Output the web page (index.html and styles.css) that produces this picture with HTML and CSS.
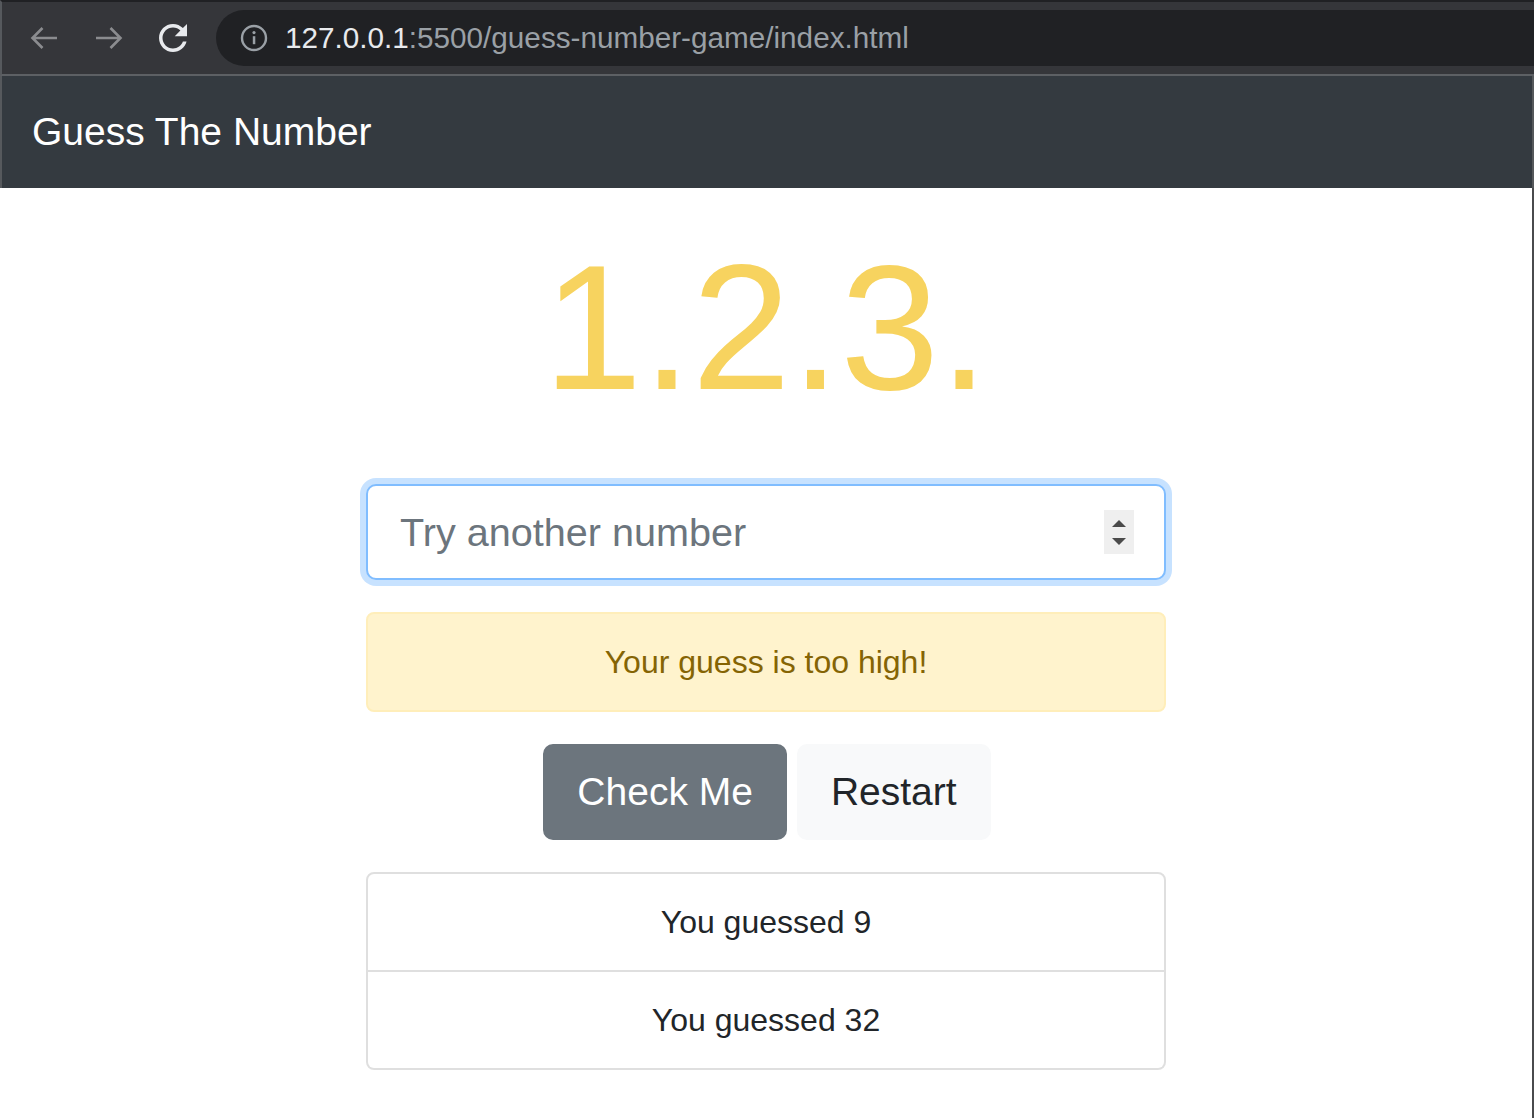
FILE: index.html
```html
<!DOCTYPE html>
<html lang="en">
<head>
<meta charset="utf-8">
<title>Guess The Number</title>
<link rel="stylesheet" href="styles.css">
</head>
<body>
<div class="window">
  <header class="toolbar">
    <div class="nav-btn back">
      <svg width="28" height="24" viewBox="0 0 28 24"><path d="M27 12H2.5M12.5 2L2.5 12l10 10" fill="none" stroke="#8b8c8f" stroke-width="2.6"/></svg>
    </div>
    <div class="nav-btn fwd">
      <svg width="28" height="24" viewBox="0 0 28 24"><path d="M1 12h24.5M15.5 2l10 10-10 10" fill="none" stroke="#8b8c8f" stroke-width="2.6"/></svg>
    </div>
    <div class="nav-btn reload">
      <svg width="28" height="28" viewBox="4 4 16 16"><path fill="#e8eaed" d="M17.65 6.35C16.2 4.9 14.21 4 12 4c-4.42 0-7.99 3.58-7.99 8s3.57 8 7.990 8c3.73 0 6.84-2.55 7.73-6h-2.08c-.82 2.33-3.04 4-5.65 4-3.31 0-6-2.690-6-6s2.69-6 6-6c1.66 0 3.14.69 4.22 1.78L13 11h7V4l-2.35 2.35z"/></svg>
    </div>
    <div class="omnibox">
      <svg class="info" width="28" height="28" viewBox="0 0 28 28"><circle cx="14" cy="14" r="12" fill="none" stroke="#9aa0a6" stroke-width="2.4"/><rect x="12.8" y="12.2" width="2.5" height="8" fill="#9aa0a6"/><circle cx="14" cy="8.6" r="1.6" fill="#9aa0a6"/></svg>
      <span class="url"><span class="host">127.0.0.1</span><span class="path">:5500/guess-number-game/index.html</span></span>
    </div>
  </header>
  <nav class="navbar">
    <span class="brand">Guess The Number</span>
  </nav>
  <main class="page">
    <div class="container">
      <h1 class="score">1.2.3.</h1>
      <div class="input">
        <span class="placeholder">Try another number</span>
        <span class="spinner"><span class="tri up"></span><span class="tri down"></span></span>
      </div>
      <div class="alert">Your guess is too high!</div>
      <div class="buttons">
        <button class="btn btn-secondary">Check Me</button>
        <button class="btn btn-light">Restart</button>
      </div>
      <ul class="list">
        <li class="item">You guessed 9</li>
        <li class="item">You guessed 32</li>
      </ul>
    </div>
  </main>
</div>
</body>
</html>
```
FILE: styles.css
```css
* { box-sizing: border-box; }
html, body { margin: 0; padding: 0; }
body {
  font-family: "Liberation Sans", Arial, sans-serif;
  background: #ffffff;
  color: #212529;
  width: 1534px;
  height: 1118px;
  overflow: hidden;
}
.window { width: 1534px; }

.toolbar {
  height: 76px;
  background: #35363a;
  border-top: 2px solid #202124;
  border-bottom: 2px solid #5d6064;
  border-left: 2px solid #56595d;
  display: flex;
  align-items: center;
}
.nav-btn { display: flex; align-items: center; justify-content: center; width: 28px; height: 28px; }
.back { margin-left: 28px; }
.fwd { margin-left: 37px; }
.reload { margin-left: 36px; }
.omnibox {
  margin-left: 29px;
  flex: 1;
  height: 56px;
  background: #202124;
  border-radius: 28px 0 0 28px;
  display: flex;
  align-items: center;
  padding-left: 24px;
}
.info { flex: none; }
.url {
  margin-left: 17px;
  font-size: 29.7px;
  color: #9aa0a6;
  white-space: nowrap;
}
.host { color: #e8eaed; }

.navbar {
  height: 112px;
  background: #343a40;
  border-left: 2px solid #56595d;
  border-right: 2px solid #55585b;
  display: flex;
  align-items: center;
  padding-left: 30px;
}
.brand {
  color: #ffffff;
  font-size: 39px;
  line-height: 60px;
}

.page {
  display: flow-root;
  border-right: 2px solid #4a4b4d;
  height: 930px;
}
.container {
  width: 800px;
  margin: 0 auto;
}
.score {
  margin: 33px 0 49px;
  font-size: 178px;
  line-height: 214px;
  font-weight: 400;
  color: #f7d35f;
  text-align: center;
}
.input {
  height: 96px;
  border: 2px solid #80bdff;
  border-radius: 10px;
  box-shadow: 0 0 0 6px rgba(0, 123, 255, 0.22);
  display: flex;
  align-items: center;
  justify-content: space-between;
  padding: 0 32px;
  background: #fff;
}
.placeholder {
  font-size: 39.6px;
  color: #6c757d;
}
.spinner {
  width: 30px;
  height: 44px;
  background: #efefef;
  display: flex;
  flex-direction: column;
  align-items: center;
  justify-content: center;
  gap: 11px;
  margin-right: -2px;
}
.tri { width: 0; height: 0; border-left: 7px solid transparent; border-right: 7px solid transparent; }
.up { border-bottom: 7px solid #4a4a4a; }
.down { border-top: 7px solid #4a4a4a; }

.alert {
  margin-top: 32px;
  padding: 24px 40px;
  border: 2px solid #ffeeba;
  background: #fff3cd;
  color: #856404;
  border-radius: 8px;
  font-size: 32px;
  line-height: 48px;
  text-align: center;
}
.buttons {
  margin-top: 32px;
  display: flex;
  justify-content: center;
  gap: 10px;
  padding-left: 2px;
}
.btn {
  font-family: inherit;
  font-size: 39px;
  line-height: 60px;
  padding: 16px 32px;
  border: 2px solid transparent;
  border-radius: 10px;
  cursor: pointer;
}
.btn-secondary { background: #6c757d; border-color: #6c757d; color: #ffffff; }
.btn-light { background: #f8f9fa; border-color: #f8f9fa; color: #212529; }

.list {
  list-style: none;
  margin: 32px 0 0;
  padding: 0;
}
.item {
  padding: 24px 40px;
  border: 2px solid rgba(0, 0, 0, 0.125);
  font-size: 32px;
  line-height: 48px;
  text-align: center;
}
.item:first-child { border-radius: 8px 8px 0 0; }
.item:last-child { border-top: 0; border-radius: 0 0 8px 8px; }
```
